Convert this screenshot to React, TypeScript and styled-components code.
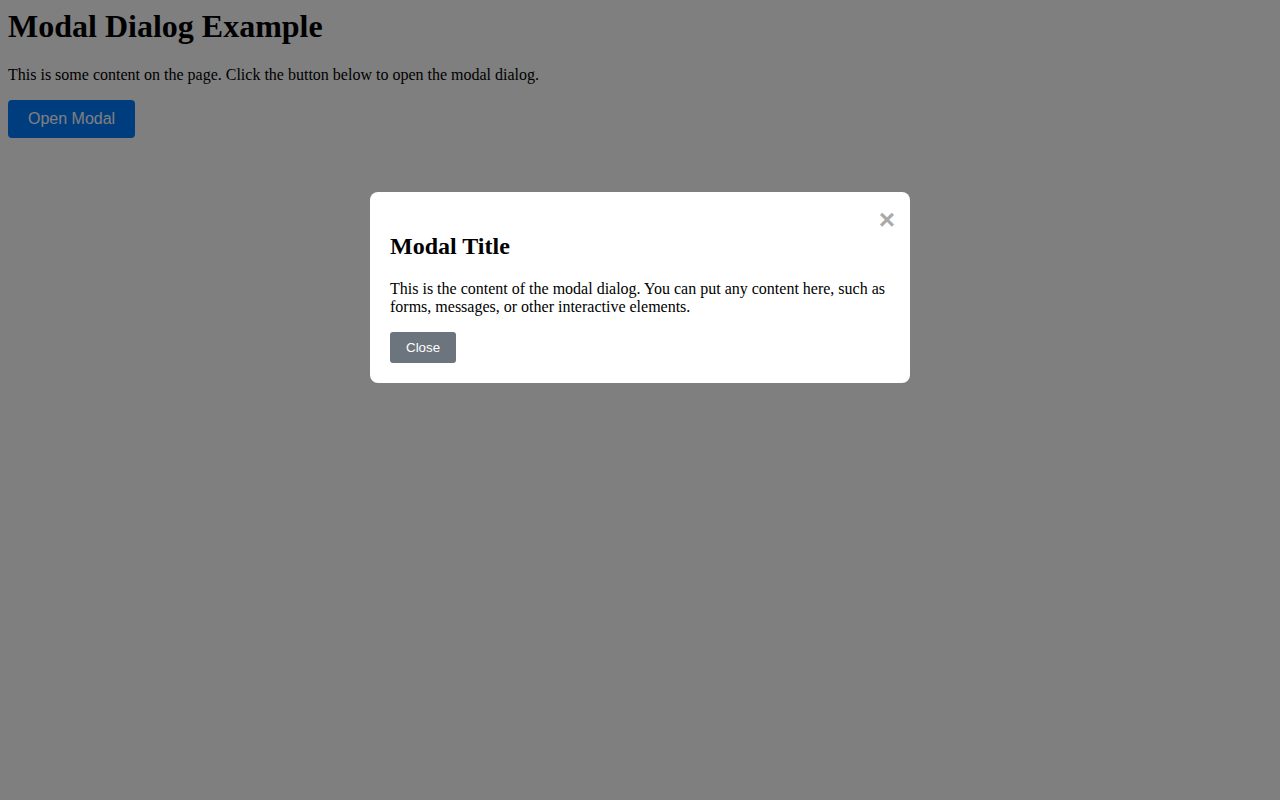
import React, { useState } from "react";
import styled, { createGlobalStyle } from "styled-components";

const GlobalStyle = createGlobalStyle`
  body {
    margin: 8px;
    font-family: "Liberation Serif", "Times New Roman", serif;
    color: #000;
    background: #fff;
  }
`;

function App() {
  const [open, setOpen] = useState(true);

  return (
    <>
      <GlobalStyle />
      <Title>Modal Dialog Example</Title>
      <Text>
        This is some content on the page. Click the button below to open the
        modal dialog.
      </Text>
      <OpenButton onClick={() => setOpen(true)}>Open Modal</OpenButton>

      {open && (
        <Overlay onClick={() => setOpen(false)}>
          <Dialog onClick={(e) => e.stopPropagation()}>
            <CloseX onClick={() => setOpen(false)}>&times;</CloseX>
            <DialogTitle>Modal Title</DialogTitle>
            <Text>
              This is the content of the modal dialog. You can put any content
              here, such as forms, messages, or other interactive elements.
            </Text>
            <CloseButton onClick={() => setOpen(false)}>Close</CloseButton>
          </Dialog>
        </Overlay>
      )}
    </>
  );
}

const Title = styled.h1`
  font-size: 32px;
  font-weight: bold;
  margin: 0 0 0.67em;
`;

const Text = styled.p`
  font-size: 16px;
  margin: 16px 0;
`;

const OpenButton = styled.button`
  font-family: "Liberation Sans", Arial, sans-serif;
  font-size: 16px;
  padding: 10px 20px;
  background-color: #007bff;
  color: #fff;
  border: none;
  border-radius: 4px;
  cursor: pointer;
`;

const Overlay = styled.div`
  position: fixed;
  inset: 0;
  z-index: 10;
  background-color: rgba(0, 0, 0, 0.5);
  overflow: auto;
`;

const Dialog = styled.div`
  position: relative;
  box-sizing: content-box;
  width: 500px;
  margin: 15% auto;
  padding: 20px;
  background-color: #fff;
  border-radius: 8px;
`;

const CloseX = styled.span`
  position: absolute;
  top: 12px;
  right: 15px;
  font-family: "Liberation Sans", Arial, sans-serif;
  font-size: 28px;
  font-weight: bold;
  line-height: 32px;
  color: #aaa;
  cursor: pointer;
`;

const DialogTitle = styled.h2`
  font-size: 24px;
  font-weight: bold;
  margin: 21px 0 20px;
`;

const CloseButton = styled.button`
  font-family: "Liberation Sans", Arial, sans-serif;
  font-size: 13.333px;
  padding: 8px 16px;
  background-color: #6c757d;
  color: #fff;
  border: none;
  border-radius: 3px;
  cursor: pointer;
`;

export default App;
